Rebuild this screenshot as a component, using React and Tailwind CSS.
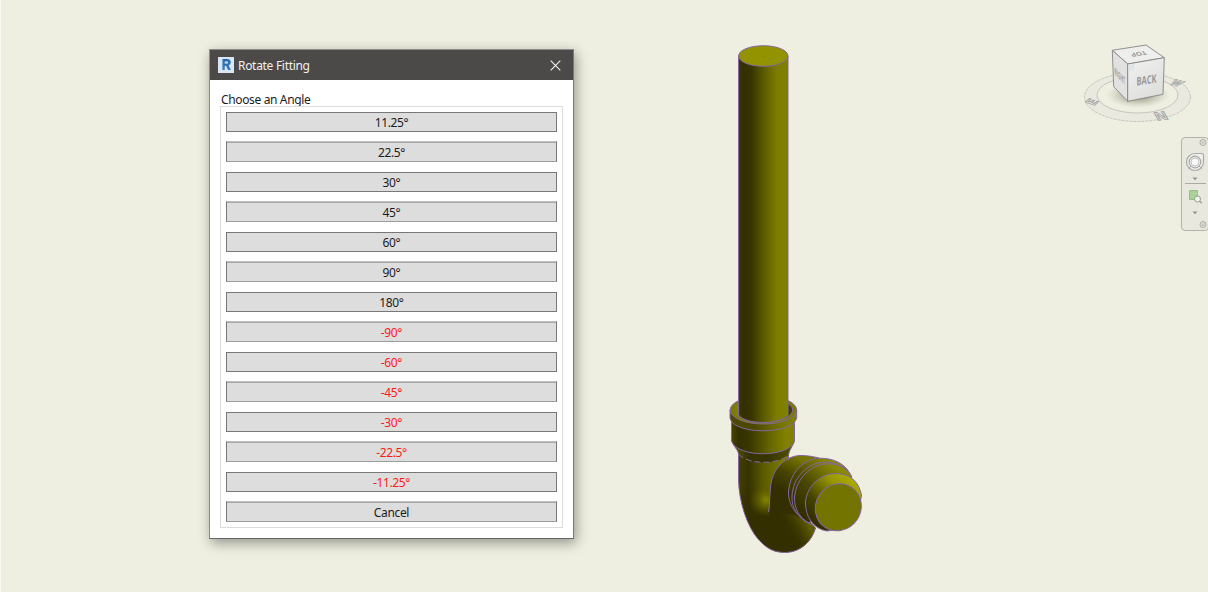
import React from "react";

const FONT = "font-['Noto_Sans','Open_Sans',sans-serif]";

const ANGLES = ["11.25°", "22.5°", "30°", "45°", "60°", "90°", "180°", "-90°", "-60°", "-45°", "-30°", "-22.5°", "-11.25°", "Cancel"];

function AngleButton({ label, index }) {
  const crisp = index % 2 === 0;
  const size = crisp
    ? "h-[20px] mb-[9px] border-[#787878]"
    : "h-[21px] mb-[10px] border-x-[#787878] border-t-[#c0c0c0] border-b-[#9c9c9c] shadow-[inset_0_1px_0_#a8a8a8]";
  const color = label.startsWith("-") ? "text-[#ff1a1a]" : "text-[#1c1c1c]";
  return (
    <button className={`flex w-full shrink-0 items-center justify-center border bg-[#dddddd] text-[12px] leading-[18px] tracking-[-0.35px] ${size} ${color}`}>
      <span className="relative top-[1px]">{label}</span>
    </button>
  );
}

function RevitIcon() {
  return (
    <svg width="16" height="16" viewBox="0 0 16 16">
      <defs>
        <linearGradient id="rv" x1="0" y1="0" x2="1" y2="1">
          <stop offset="0" stopColor="#1f5a9c" />
          <stop offset="1" stopColor="#3a86cc" />
        </linearGradient>
      </defs>
      <rect width="16" height="16" fill="#dbe6f2" />
      <path d="M4 2h5.200c2.300 0 3.600 1.300 3.600 3.300 0 1.500-.8 2.600-2.100 3L13 13h-3L8 8.800H6.700V13H4z" fill="url(#rv)" />
      <path d="M6.700 4.200h1.900c1 0 1.500.4 1.500 1.200s-.5 1.300-1.500 1.300H6.700z" fill="#b9d0e8" />
      <path d="M4 2v11h1.200V2z" fill="#6aa5dc" />
    </svg>
  );
}

function Dialog() {
  return (
    <section className="mt-[49px] ml-[209px] flex h-[490px] w-[365px] shrink-0 flex-col border border-[#8c8c88] border-r-[#777775] border-b-[#66666a] bg-white shadow-[2px_4px_12px_rgba(0,0,0,0.38)]">
      <header className="flex h-[30px] shrink-0 items-center bg-[#4c4a48] pl-[8px] pr-[12px]">
        <RevitIcon />
        <h1 className="ml-[4px] flex-1 pt-[2px] text-[12px] tracking-[-0.3px] text-[#f0f0f0]">Rotate Fitting</h1>
        <svg width="11" height="11" viewBox="0 0 11 11" stroke="#f2f2f2" strokeWidth="1.1">
          <path d="M.7.700 10.300 10.300M10.300.700.700 10.300" />
        </svg>
      </header>
      <div className="flex flex-col px-[10px] pt-[10px]">
        <p className="h-[16px] pl-[1px] text-[12px] leading-[19px] tracking-[-0.36px] text-[#1c1c1c]">Choose an Angle</p>
        <div className="flex h-[422px] w-[343px] flex-col border border-[#dcdcdc] px-[5px] pt-[5px]">
          {ANGLES.map((a, i) => <AngleButton key={a} label={a} index={i} />)}
        </div>
      </div>
    </section>
  );
}

function Pipe() {
  return (
    <svg className="mt-[35px] ml-[146px] shrink-0" width="150" height="525" viewBox="720 35 150 525" strokeWidth="1" stroke="#8466a0" fill="none">
      <defs>
        <linearGradient id="tube" gradientUnits="userSpaceOnUse" x1="738" x2="788" y1="0" y2="0">
          <stop offset="0" stopColor="#403d00" />
          <stop offset=".1" stopColor="#332f00" />
          <stop offset=".27" stopColor="#383500" />
          <stop offset=".55" stopColor="#606000" />
          <stop offset=".78" stopColor="#7c7c00" />
          <stop offset="1" stopColor="#808000" />
        </linearGradient>
        <linearGradient id="hub" gradientUnits="userSpaceOnUse" x1="731" x2="796" y1="0" y2="0">
          <stop offset="0" stopColor="#484500" />
          <stop offset=".12" stopColor="#333000" />
          <stop offset=".3" stopColor="#3b3900" />
          <stop offset=".6" stopColor="#656500" />
          <stop offset=".85" stopColor="#828200" />
          <stop offset="1" stopColor="#808000" />
        </linearGradient>
        <linearGradient id="rim" gradientUnits="userSpaceOnUse" x1="731" x2="796" y1="0" y2="0">
          <stop offset="0" stopColor="#4c4a00" />
          <stop offset=".35" stopColor="#4a4800" />
          <stop offset=".7" stopColor="#6f6f00" />
          <stop offset="1" stopColor="#828200" />
        </linearGradient>
        <linearGradient id="neck" gradientUnits="userSpaceOnUse" x1="738" x2="790" y1="0" y2="0">
          <stop offset="0" stopColor="#504e00" />
          <stop offset=".2" stopColor="#343200" />
          <stop offset=".6" stopColor="#383600" />
          <stop offset="1" stopColor="#505000" />
        </linearGradient>
        <linearGradient id="bend" gradientUnits="userSpaceOnUse" x1="738" y1="475" x2="784" y2="475">
          <stop offset="0" stopColor="#454200" />
          <stop offset=".22" stopColor="#353200" />
          <stop offset=".55" stopColor="#5b5a00" />
          <stop offset="1" stopColor="#7c7c00" />
        </linearGradient>
        <linearGradient id="fade" gradientUnits="userSpaceOnUse" x1="0" y1="485" x2="0" y2="516">
          <stop offset="0" stopColor="#332f00" stopOpacity="0" />
          <stop offset="1" stopColor="#332f00" />
        </linearGradient>
        <radialGradient id="glow" gradientUnits="userSpaceOnUse" cx="766" cy="500" r="17">
          <stop offset="0" stopColor="#858500" />
          <stop offset="1" stopColor="#5c5b00" stopOpacity="0" />
        </radialGradient>
        <linearGradient id="lowlight" gradientUnits="userSpaceOnUse" x1="786" y1="532" x2="806" y2="521">
          <stop offset="0" stopColor="#332f00" stopOpacity="0" />
          <stop offset="1" stopColor="#5e5d00" />
        </linearGradient>
        <linearGradient id="arm" gradientUnits="userSpaceOnUse" x1="784" y1="492" x2="803" y2="459">
          <stop offset="0" stopColor="#332f00" />
          <stop offset=".45" stopColor="#454200" />
          <stop offset="1" stopColor="#777700" />
        </linearGradient>
        <linearGradient id="ring" gradientUnits="userSpaceOnUse" x1="800" y1="510" x2="842" y2="464">
          <stop offset="0" stopColor="#332f00" />
          <stop offset=".4" stopColor="#494700" />
          <stop offset=".85" stopColor="#858500" />
          <stop offset="1" stopColor="#8e8e00" />
        </linearGradient>
        <linearGradient id="cap" gradientUnits="userSpaceOnUse" x1="808" y1="515" x2="846" y2="476">
          <stop offset="0" stopColor="#332f00" />
          <stop offset=".3" stopColor="#474500" />
          <stop offset=".75" stopColor="#959500" />
          <stop offset="1" stopColor="#a8a800" />
        </linearGradient>
        <clipPath id="bendClip">
          <path d="M738.500 450V480C739 502 747 526 758 539C767 549 774 552.500 786 552.500C801 552 812 541 815.500 528L789 500V450Z" />
        </clipPath>
      </defs>
      <g clipPath="url(#bendClip)" stroke="none">
        <path d="M735 450H820V560H735Z" fill="url(#bend)" />
        <path d="M735 485H820V560H735Z" fill="url(#fade)" />
        <circle cx="766" cy="500" r="17" fill="url(#glow)" />
        <path d="M769 512H820V560H786Z" fill="#332f00" />
        <path d="M775 505H820V560H800Z" fill="url(#lowlight)" />
      </g>
      <path d="M738.500 454V480C739 502 747 526 758 539C767 549 774 552.500 786 552.500C801 552 812 541 815.500 528" />
      <path d="M769.500 512C769.500 494 769.500 484 774 473C781 461 791 455.500 801 455.500C808 455.500 815 457 819 458L810 524L795 515Z" fill="url(#arm)" stroke="none" />
      <path d="M768.500 512C770 506 769.500 490 771.500 481C776 463 790 455.500 801 455.500C808 455.500 815 457 819 458" />
      <path d="M788.500 456V460" />
      <path d="M732 438C733 447 738 449 738.500 454C748 465 778 465 788.500 455C789 449 794 446 794.500 438Z" fill="url(#neck)" stroke="none" />
      <path d="M732 440C733 447 738 449 738.500 454M788.500 455C789 449 794 446 794.500 440" />
      <path d="M738.500 454C748 465 778 465 788.500 455" strokeDasharray="6 3" />
      <path d="M731.500 418V441C737 458 789 458 794.500 441V418Z" fill="url(#hub)" />
      <path d="M730 410V418C733 435 793 435 796.700 418V410Z" fill="url(#rim)" />
      <ellipse cx="763.400" cy="410" rx="33.300" ry="14" fill="#7b7b00" />
      <ellipse cx="763.400" cy="410" rx="29.300" ry="12" fill="#3f3d00" />
      <path d="M734 410a29.300 12 0 0 0 5 7V402a30 12 0 0 0-5 8" fill="#808000" stroke="none" />
      <path d="M738.500 56V415C746 425 780 425 788 415V56Z" fill="url(#tube)" />
      <ellipse cx="763.300" cy="56" rx="24.700" ry="10.300" fill="#939300" />
      <circle cx="763" cy="56.500" r=".6" fill="#777700" stroke="none" />
      <path d="M809 523C793 514 788 502 788.500 491C790 474 801 462 815 458.500C828 457 840 461 847 469L852 477Z" fill="url(#ring)" />
      <path d="M810 524C798 518 791 507 792 496C793 478 806 465 820 462.500C832 461 843 464 851 475M814 526C800 520 794 509 794.500 497C796 480 808 468 821 464.500C832 462.500 842 465 848 471" />
      <path d="M827 531C813 529 805 516 805.500 502C807 486 820 474 835 473.500C850 473 859 482 861.500 495L858 517L840 529Z" fill="url(#cap)" />
      <ellipse cx="838.300" cy="507.300" rx="22.500" ry="24" transform="rotate(35 838.300 507.300)" fill="#737300" />
    </svg>
  );
}

function ViewCube() {
  return (
    <svg className="mt-[40px] ml-[210px] shrink-0" width="112" height="88" viewBox="1080 40 112 88" fontFamily="Open Sans, sans-serif">
      <defs>
        <radialGradient id="sh"><stop offset=".3" stopColor="#777766" stopOpacity=".6" /><stop offset="1" stopColor="#aaaa99" stopOpacity="0" /></radialGradient>
        <linearGradient id="face" x1="0" x2=".6" y1="0" y2="1"><stop offset="0" stopColor="#f1f1f0" /><stop offset="1" stopColor="#dededc" /></linearGradient>
      </defs>
      <ellipse cx="1137.500" cy="97" rx="53" ry="24.500" fill="#e9e9e0" stroke="#bbbbb5" strokeWidth=".8" strokeDasharray="3 1" />
      <ellipse cx="1137.500" cy="95" rx="40.500" ry="18" fill="#eeefe0" stroke="#bbbbb5" strokeWidth=".8" />
      <ellipse cx="1138" cy="95" rx="32" ry="13" fill="url(#sh)" />
      <g fill="#dcdcd8" stroke="#a0a09d" strokeWidth=".8" fontWeight="700" fontSize="13" textAnchor="middle">
        <text transform="matrix(1.15 -.15 .5 .85 1161 116)" y="4.500">N</text>
        <text transform="matrix(.75 -.7 1 .35 1092 102)" y="4.500">E</text>
        <text transform="matrix(.75 .2 -.75 .55 1177 83)" y="4.500">W</text>
      </g>
      <g stroke="#858585" strokeWidth=".9" strokeLinejoin="round">
        <path d="M1112.300 50.300 1146 45 1164.300 57.700 1127.700 64Z" fill="#eeeeec" />
        <path d="M1112.300 50.300 1127.700 64V101.300L1113.700 86.700Z" fill="#e1e1df" />
        <path d="M1127.700 64 1164.300 57.700 1163 94.300 1127.700 101.300Z" fill="url(#face)" />
      </g>
      <path d="M1128.500 65l6-1v6l-6 1z" fill="#dfe5e7" />
      <g fill="#999999" fontWeight="700" textAnchor="middle">
        <text transform="matrix(.72 -.1 0 1.1 1146.500 84)" fontSize="10.500">BACK</text>
        <text transform="matrix(-.95 .15 -.4 -.65 1137.500 52)" fontSize="8">TOP</text>
        <text transform="matrix(.4 .4 0 1.150 1119.800 79.500)" fontSize="8.500" fill="#a0a0a0">RIGHT</text>
      </g>
    </svg>
  );
}

function NavBar() {
  return (
    <div className="mt-[9px] mr-[-1px] flex h-[94px] w-[28px] flex-col items-center self-end rounded-[4px] border border-[#b3b3ad] bg-[#e8e8df]">
      <svg width="26" height="92" viewBox="1182 138 26 92" fill="none" stroke="#aaaaa6">
        <circle cx="1203" cy="142.500" r="3" />
        <path d="m1201.500 141 3 3m0-3-3 3" strokeWidth=".7" />
        <path d="M1186.500 162a8.500 8.500 0 0 1 8.500-8.500H1201.500q2 0 2 2V162a8.500 8.500 0 0 1-17 0Z" fill="#f0f0ed" strokeWidth="1.200" />
        <circle cx="1195" cy="162" r="5.800" strokeWidth="1.200" />
        <path d="m1191 166-2.500 2.500m10.500-2.500 2.500 2.500" />
        <circle cx="1195" cy="162" r="4" fill="#fafaf8" strokeWidth=".7" />
        <path d="M1192.500 177.500h5l-2.500 2.700zM1192.500 211.500h5l-2.500 2.700z" fill="#929290" stroke="none" />
        <path d="M1185 183.500h21" />
        <path d="M1189.500 190.500h8v9h-8z" fill="#a6cf92" stroke="#98bc88" />
        <path d="M1190 193.500h8m-8 3h8" stroke="#bddbad" strokeWidth=".6" />
        <circle cx="1197.500" cy="199" r="3" fill="#f1f3ec" stroke="#92a0a0" />
        <path d="m1199.700 201.200 2 2" stroke="#92a0a0" strokeWidth="1.300" />
        <circle cx="1203" cy="224.500" r="3" />
        <path d="M1201.500 224h3m-3 1.300h3" strokeWidth=".8" />
      </svg>
    </div>
  );
}

export default function App() {
  return (
    <main className={`flex h-[592px] w-[1208px] items-start overflow-hidden border-l border-[#fafaf5] bg-[#eeefe0] ${FONT}`}>
      <div className="-ml-px flex w-[1208px] shrink-0 items-start">
        <Dialog />
        <Pipe />
        <aside className="flex flex-1 flex-col">
          <ViewCube />
          <NavBar />
        </aside>
      </div>
    </main>
  );
}
